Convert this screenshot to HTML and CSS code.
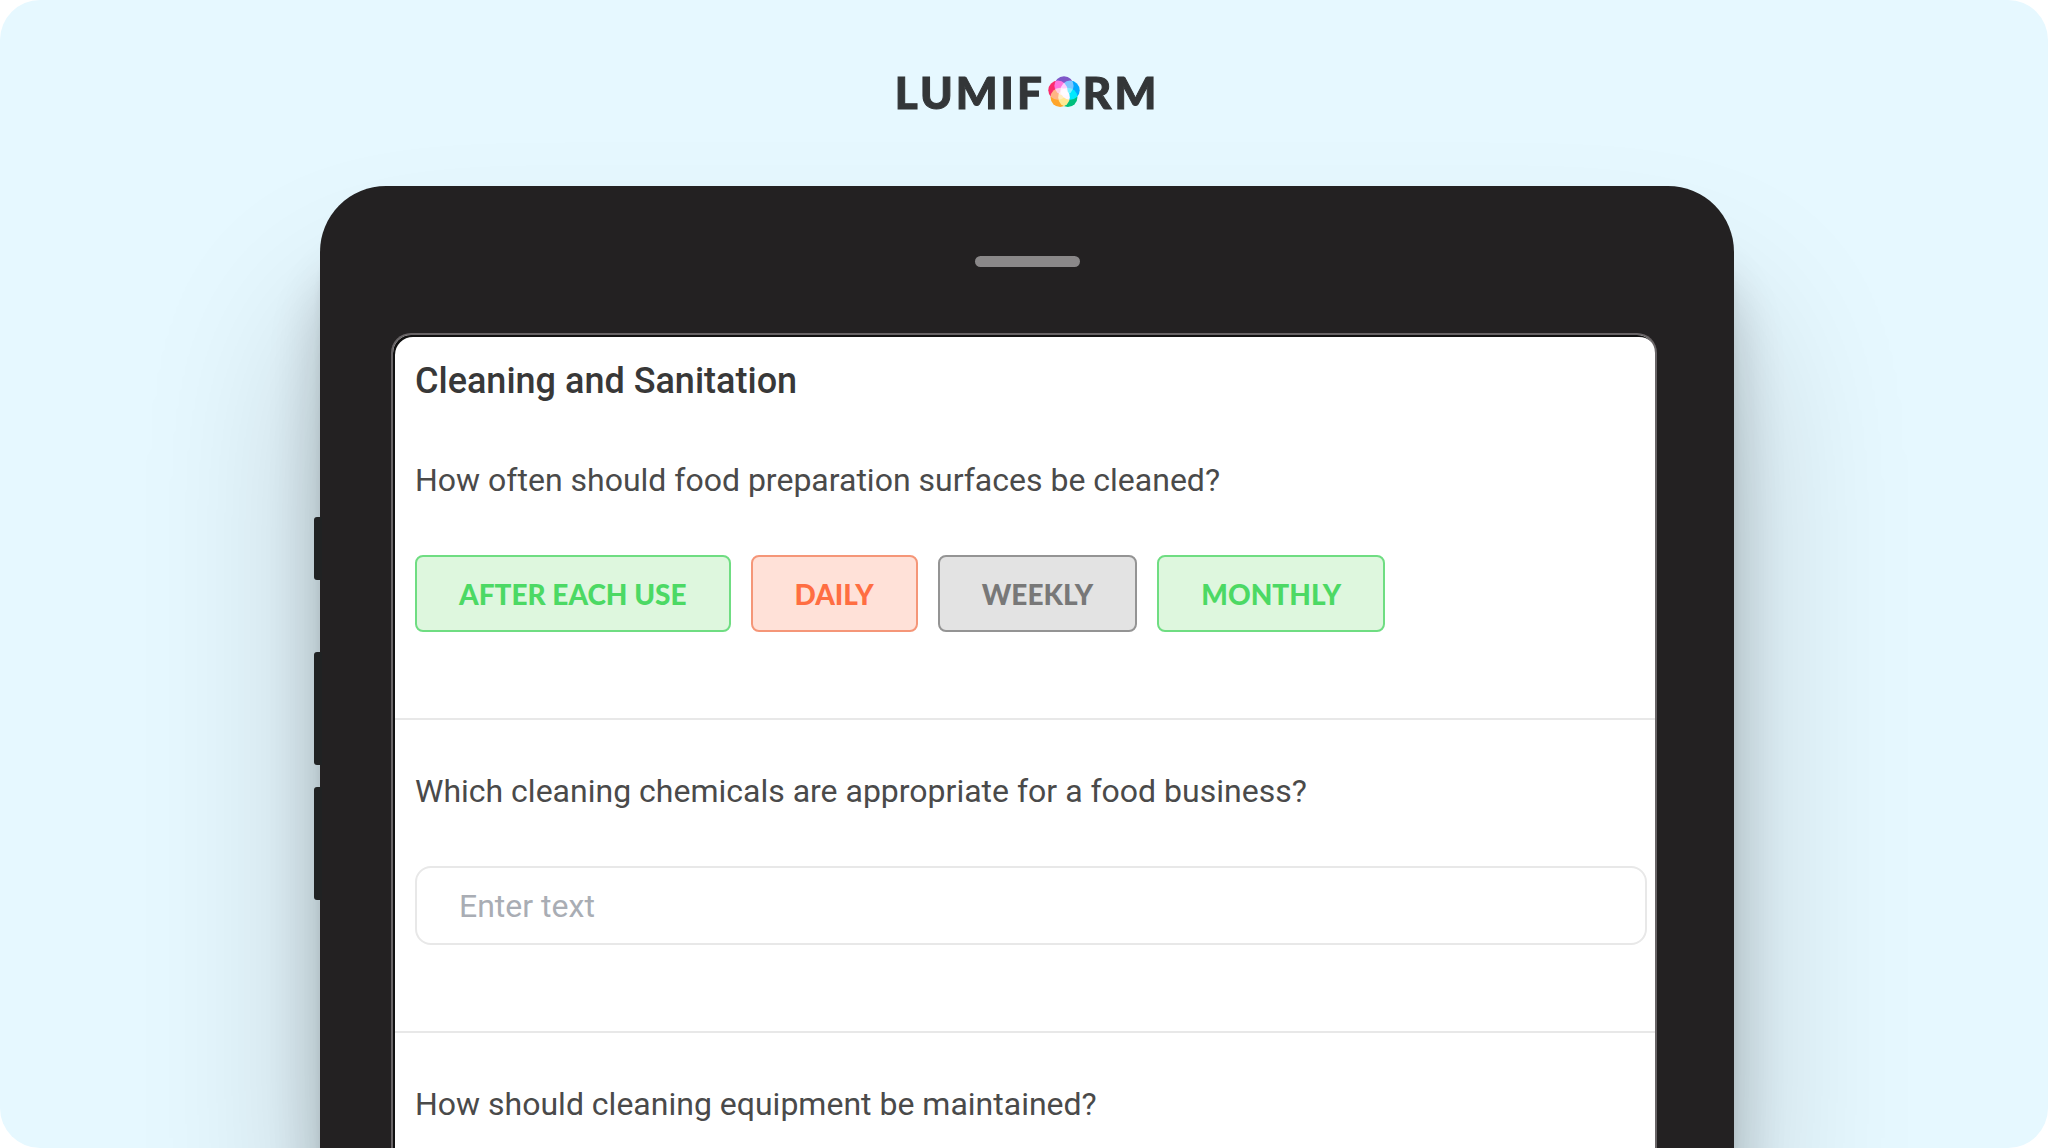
FILE: index.html
```html
<!DOCTYPE html>
<html lang="en">
<head>
    <meta charset="UTF-8">
    <meta name="viewport" content="width=device-width, initial-scale=1.0">
    <title>Lumiform - Cleaning and Sanitation</title>
    <link rel="stylesheet" href="styles.css">
</head>
<body>
    <div class="stage">
        <header class="logo">
            <span>LUMIF</span>
            <svg class="logo-mark" viewBox="0 0 32 32" role="img" aria-label="O">
                <g class="petals">
                    <circle cx="16" cy="9.8" r="9.6" fill="#7e57c8"/>
                    <circle cx="22.1" cy="14.2" r="9.6" fill="#00a8ff"/>
                    <circle cx="19.8" cy="21.4" r="9.6" fill="#00bf7d"/>
                    <circle cx="12.2" cy="21.4" r="9.6" fill="#ffa62b"/>
                    <circle cx="9.9" cy="14.2" r="9.6" fill="#fb2b6c"/>
                </g>
            </svg>
            <span>RM</span>
        </header>

        <main class="tablet">
            <div class="side-buttons">
                <span class="side-button small"></span>
                <span class="side-button"></span>
                <span class="side-button"></span>
            </div>
            <div class="speaker"></div>

            <form class="screen">
                <section class="question first">
                    <h1>Cleaning and Sanitation</h1>
                    <p>How often should food preparation surfaces be cleaned?</p>
                    <div class="answers">
                        <button type="button" class="answer green">AFTER EACH USE</button>
                        <button type="button" class="answer red">DAILY</button>
                        <button type="button" class="answer grey">WEEKLY</button>
                        <button type="button" class="answer green">MONTHLY</button>
                    </div>
                </section>
                <section class="question">
                    <label for="chemicals">Which cleaning chemicals are appropriate for a food business?</label>
                    <input type="text" id="chemicals" name="chemicals" placeholder="Enter text">
                </section>
                <section class="question">
                    <p>How should cleaning equipment be maintained?</p>
                </section>
            </form>
        </main>
    </div>
</body>
</html>
```
FILE: styles.css
```css
* {
    box-sizing: border-box;
}
body {
    margin: 0;
    background-color: #fff;
    color: #4a4a4a;
    font-family: Roboto, Arial, sans-serif;
}
.stage {
    display: flex;
    flex-direction: column;
    height: 100vh;
    padding: 66px 314px 0 320px;
    background-color: #e6f8ff;
    border-radius: 40px;
    overflow: hidden;
}

/* Logo */
.logo {
    display: flex;
    justify-content: center;
    align-items: center;
    gap: 3px;
    height: 52px;
    margin-bottom: 68px;
    color: #333638;
    font-family: Lato, sans-serif;
    font-size: 44px;
    font-weight: 900;
    line-height: 52px;
    letter-spacing: 3px;
    -webkit-text-stroke: 1px #333638;
}
.logo-mark {
    width: 32px;
    height: 32px;
}
.petals {
    isolation: isolate;
}
.petals circle {
    mix-blend-mode: screen;
    stroke: none;
}

/* Tablet */
.tablet {
    position: relative;
    flex: 1 0 auto;
    display: flex;
    flex-direction: column;
    padding: 70px 77px 0 71px;
    background-color: #232122;
    border-radius: 66px 66px 0 0;
    box-shadow: 0 130px 180px rgba(0, 0, 0, 0.2), 0 80px 60px rgba(0, 0, 0, 0.2), 0 40px 14px -4px rgba(0, 0, 0, 0.12);
}
.side-buttons {
    position: absolute;
    top: 331px;
    left: -6px;
    display: flex;
    flex-direction: column;
    gap: 22px;
}
.side-button {
    width: 8px;
    height: 113px;
    background-color: #202223;
    border-radius: 3px 0 0 3px;
}
.side-button.small {
    height: 63px;
    margin-bottom: 50px;
}
.speaker {
    align-self: center;
    width: 105px;
    height: 11px;
    margin: 0 0 66px 6px;
    background-color: #8a8889;
    border-radius: 6px;
}
.screen {
    flex: 1;
    background-color: #fff;
    border: 2px solid #686466;
    border-bottom: none;
    border-radius: 20px 20px 0 0;
    box-shadow: inset 2px 2px 0 #111;
}

/* Questions */
.question {
    display: flex;
    flex-direction: column;
    gap: 55px;
    margin-left: 2px;
    padding: 51px 8px 86px 20px;
    border-top: 2px solid #e8e8e8;
}
.question.first {
    padding-top: 22px;
    border-top-color: transparent;
}
.question:last-child {
    padding-bottom: 0;
}
h1, p {
    margin: 0;
}
h1 {
    margin-bottom: 2px;
    color: #383838;
    font-size: 36px;
    font-weight: 500;
    line-height: 44px;
}
p, label {
    font-size: 32px;
    line-height: 40px;
}
.answers {
    display: flex;
    flex-wrap: wrap;
    gap: 20px;
}
.answer {
    height: 77px;
    padding: 0 42px;
    border: 2px solid;
    border-radius: 8px;
    font-family: Lato, sans-serif;
    font-size: 28px;
    font-weight: 900;
    cursor: pointer;
}
.green {
    color: #4cd964;
    background-color: #def7de;
    border-color: #6fdd82;
}
.red {
    color: #ff6e42;
    background-color: #ffe1d8;
    border-color: #f59678;
}
.grey {
    color: #787878;
    background-color: #e3e3e3;
    border-color: #949494;
}
input[type="text"] {
    width: 100%;
    height: 79px;
    padding: 0 42px;
    color: #4a4a4a;
    border: 2px solid #e8e8e8;
    border-radius: 16px;
    font-family: inherit;
    font-size: 32px;
}
input::placeholder {
    color: #a9adb4;
}
```
